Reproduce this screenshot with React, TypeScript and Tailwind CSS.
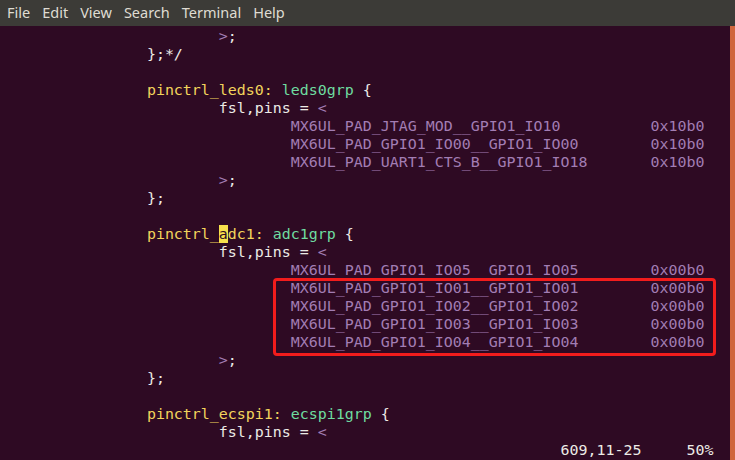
import React from "react";

const Y = "text-[#f2d45c]";
const G = "text-[#6fdca0]";
const P = "text-[#a27db3]";
const W = "text-[#ecebe6]";

const sp = (n: number) => " ".repeat(n);

function Pin({ name, value }: { name: string; value: string }) {
  return (
    <div className="h-[18px] whitespace-pre">
      {sp(32)}
      <span className={P}>{name.padEnd(40, " ")}</span>
      <span className={P}>{value}</span>
    </div>
  );
}

function Line({ children }: { children?: React.ReactNode }) {
  return <div className="h-[18px] whitespace-pre">{children}</div>;
}

function Close() {
  return (
    <Line>
      {sp(24)}
      <span className={P}>&gt;</span>
      <span className={W}>;</span>
    </Line>
  );
}

function Pins() {
  return (
    <Line>
      {sp(24)}
      <span className={W}>fsl,pins = </span>
      <span className={P}>&lt;</span>
    </Line>
  );
}

export default function App() {
  return (
    <div className="w-[735px] h-[460px] overflow-hidden bg-[#2e0a23] flex flex-col">
      <div className="h-[26px] bg-[#3c3b37] flex items-center gap-[12px] pl-[7px] text-[14.5px] text-[#dfdbd2] font-['Noto_Sans',sans-serif]">
        <span>File</span>
        <span>Edit</span>
        <span>View</span>
        <span>Search</span>
        <span>Terminal</span>
        <span>Help</span>
      </div>
      <div className="flex flex-1">
        <div className="relative flex-1 pt-[1px] pl-[3px] font-['DejaVu_Sans_Mono',monospace] text-[14.95px] leading-[18px] text-[#ecebe6]">
          <Close />
          <Line>{sp(16)}<span className={W}>{"};*/"}</span></Line>
          <Line />
          <Line>
            {sp(16)}
            <span className={Y}>pinctrl_leds0:</span> <span className={G}>leds0grp</span>{" {"}
          </Line>
          <Pins />
          <Pin name="MX6UL_PAD_JTAG_MOD__GPIO1_IO10" value="0x10b0" />
          <Pin name="MX6UL_PAD_GPIO1_IO00__GPIO1_IO00" value="0x10b0" />
          <Pin name="MX6UL_PAD_UART1_CTS_B__GPIO1_IO18" value="0x10b0" />
          <Close />
          <Line>{sp(16)}{"};"}</Line>
          <Line />
          <Line>
            {sp(16)}
            <span className={Y}>pinctrl_</span>
            <span className="bg-[#f6e04c] text-[#2e0a23]">a</span>
            <span className={Y}>dc1:</span> <span className={G}>adc1grp</span>{" {"}
          </Line>
          <Pins />
          <Pin name="MX6UL_PAD_GPIO1_IO05__GPIO1_IO05" value="0x00b0" />
          <Pin name="MX6UL_PAD_GPIO1_IO01__GPIO1_IO01" value="0x00b0" />
          <Pin name="MX6UL_PAD_GPIO1_IO02__GPIO1_IO02" value="0x00b0" />
          <Pin name="MX6UL_PAD_GPIO1_IO03__GPIO1_IO03" value="0x00b0" />
          <Pin name="MX6UL_PAD_GPIO1_IO04__GPIO1_IO04" value="0x00b0" />
          <Close />
          <Line>{sp(16)}{"};"}</Line>
          <Line />
          <Line>
            {sp(16)}
            <span className={Y}>pinctrl_ecspi1:</span> <span className={G}>ecspi1grp</span>{" {"}
          </Line>
          <Pins />
          <Line>{sp(62)}{"609,11-25"}{sp(5)}{"50%"}</Line>
          <div className="absolute left-[273px] top-[252px] w-[443px] h-[78px] border-[3px] border-[#f21c1c] rounded-[4px]" />
        </div>
        <div className="w-[5px] bg-[#d0653c]" />
      </div>
    </div>
  );
}
